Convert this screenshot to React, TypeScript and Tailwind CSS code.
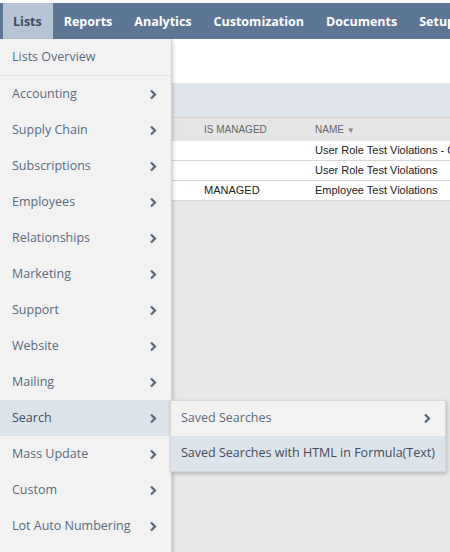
import React from 'react';

const tabs = ['Lists', 'Reports', 'Analytics', 'Customization', 'Documents', 'Setup'];

const menuItems = [
  'Accounting',
  'Supply Chain',
  'Subscriptions',
  'Employees',
  'Relationships',
  'Marketing',
  'Support',
  'Website',
  'Mailing',
  'Search',
  'Mass Update',
  'Custom',
  'Lot Auto Numbering',
];

const rows = [
  { managed: '', name: 'User Role Test Violations - Custom' },
  { managed: '', name: 'User Role Test Violations' },
  { managed: 'MANAGED', name: 'Employee Test Violations' },
];

const Chevron: React.FC = () => (
  <svg width="8" height="11" viewBox="0 0 8 11" className="shrink-0">
    <polyline points="2,1.5 6,5.5 2,9.5" fill="none" stroke="#56667f" strokeWidth="2.2" />
  </svg>
);

export default function App() {
  return (
    <div className="relative w-[450px] h-[552px] overflow-hidden bg-[#e8e8e8] font-['Open_Sans',sans-serif]">
      <div className="h-[3px] bg-white" />

      {/* top nav */}
      <nav className="h-[36px] bg-[#5e7696] flex pl-[3px] whitespace-nowrap">
        {tabs.map((t, i) => (
          <div
            key={t}
            className={
              i === 0
                ? 'pl-[10px] pr-[11px] pt-[2px] flex items-center bg-[#b6c4d5] text-[#3d4c61] text-[12.5px] font-bold'
                : 'px-[11px] pt-[2px] flex items-center text-white text-[12.5px] font-bold'
            }
          >
            {t}
          </div>
        ))}
      </nav>

      <div className="h-[44px] bg-white" />
      <div className="h-[35px] bg-[#e0e5ed] border-b border-[#d4d4d4]" />

      {/* results table */}
      <div className="font-['Liberation_Sans',Arial,sans-serif] text-[11px]">
        <div className="h-[23px] bg-[#e5e5e5] flex items-center text-[10px] text-[#666]">
          <div className="pl-[204px] w-[315px]">IS MANAGED</div>
          <div>
            NAME <span className="text-[8px] text-[#888]">▼</span>
          </div>
        </div>
        {rows.map((r, i) => (
          <div key={i} className="h-[20px] bg-white border-b border-[#d8d8d8] flex items-center text-[#222] whitespace-nowrap">
            <div className="pl-[204px] w-[315px] shrink-0">{r.managed}</div>
            <div>{r.name}</div>
          </div>
        ))}
      </div>

      {/* Lists dropdown */}
      <div className="absolute left-0 top-[39px] w-[172px] bg-[#f2f2f2] border-r border-b border-[#d2d2d2] shadow-[1px_2px_4px_rgba(0,0,0,0.2)] text-[12.5px] text-[#5a6a80]">
        <div className="h-[37px] flex items-center pl-[12px] border-b border-[#e2e2e2]">Lists Overview</div>
        {menuItems.map((m) => (
          <div
            key={m}
            className={
              'h-[36px] flex items-center justify-between pl-[12px] pr-[14px] whitespace-nowrap ' +
              (m === 'Search' ? 'bg-[#dde3eb] text-[#3f4d60]' : '')
            }
          >
            <span>{m}</span>
            <Chevron />
          </div>
        ))}
        <div className="h-[18px]" />
      </div>

      {/* Search submenu */}
      <div className="absolute left-[170px] top-[400px] w-[276px] bg-[#f2f2f2] border border-[#d6d6d6] shadow-[1px_2px_4px_rgba(0,0,0,0.2)] text-[12.5px] whitespace-nowrap">
        <div className="h-[35px] flex items-center justify-between pl-[10px] pr-[14px] text-[#5a6a80]">
          <span>Saved Searches</span>
          <Chevron />
        </div>
        <div className="h-[35px] flex items-center pl-[10px] bg-[#dde3eb] text-[#3f4d60]">
          Saved Searches with HTML in Formula(Text)
        </div>
      </div>
    </div>
  );
}
